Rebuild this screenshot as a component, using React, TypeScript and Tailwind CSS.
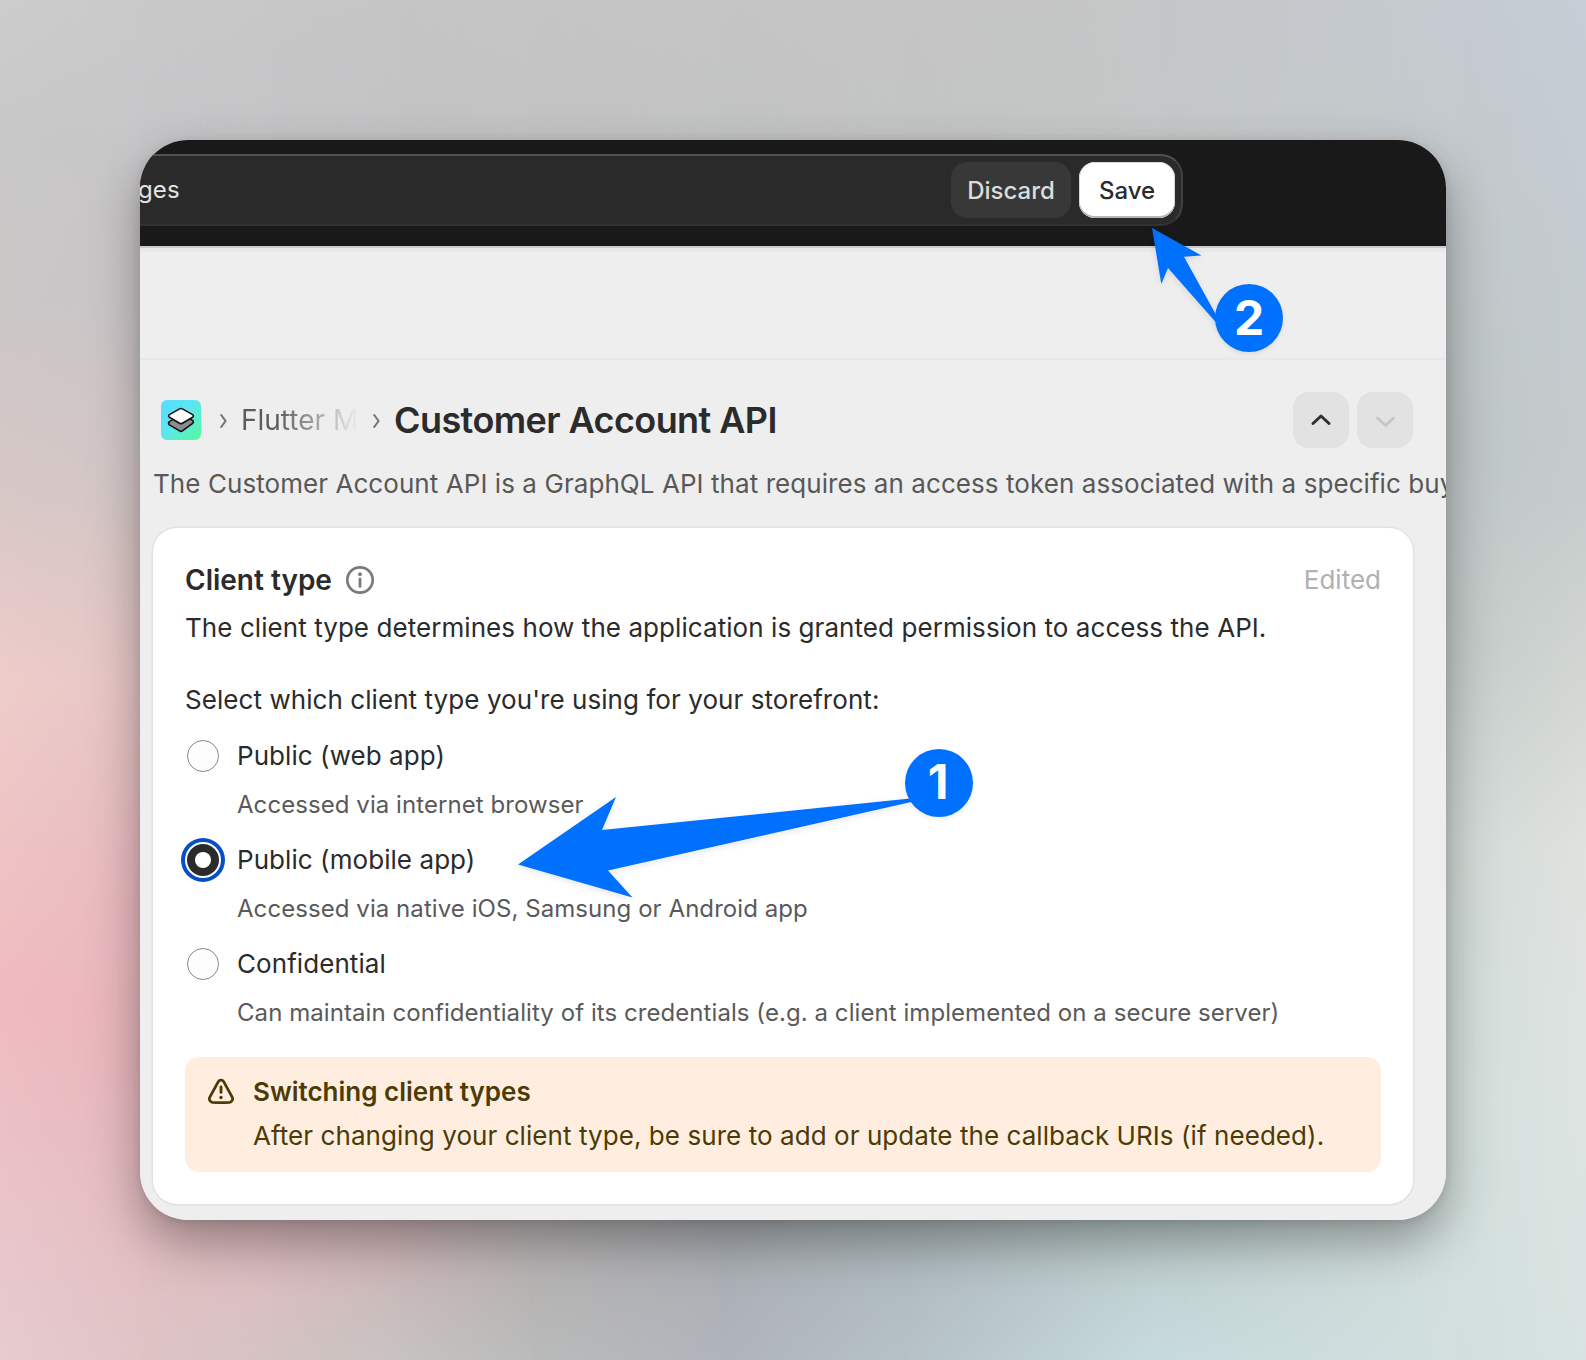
import React from "react";

const columns = [
  "bg-[linear-gradient(180deg,#cccdcc_0px,#c9c8c8_140px,#cbc7c7_300px,#d8c8c6_500px,#eecdca_680px,#efc3c5_850px,#f0bbc0_1000px,#ebc2c7_1150px,#e6ccd0_1360px)]",
  "bg-[linear-gradient(180deg,#cac9ca_0px,#c7c6c8_140px,#c9c5c7_300px,#d4c6c6_500px,#e6c6c5_680px,#e8b9be_900px,#e7b6bb_1050px,#e4bdc1_1200px,#dfc4c6_1360px)] [mask-image:linear-gradient(90deg,transparent_0px,black_140px)]",
  "bg-[linear-gradient(180deg,#c8c7c8_0px,#c5c4c6_140px,#dab5b9_1200px,#d9c0c2_1300px,#d4c3c3_1360px)] [mask-image:linear-gradient(90deg,transparent_140px,black_270px)]",
  "bg-[linear-gradient(180deg,#c5c5c6_0px,#c3c3c4_140px,#d0b1b5_1200px,#c9bbbb_1300px,#c6c3c1_1360px)] [mask-image:linear-gradient(90deg,transparent_270px,black_400px)]",
  "bg-[linear-gradient(180deg,#c5c5c5_0px,#c3c3c4_140px,#bab4b4_1200px,#b7b5b4_1300px,#babbbb_1360px)] [mask-image:linear-gradient(90deg,transparent_400px,black_530px)]",
  "bg-[linear-gradient(180deg,#c5c5c5_0px,#c2c3c3_140px,#a9adb1_1200px,#b0b4bb_1360px)] [mask-image:linear-gradient(90deg,transparent_530px,black_720px)]",
  "bg-[linear-gradient(180deg,#c5c5c5_0px,#c3c4c4_140px,#acb6b9_1200px,#b5c1c7_1360px)] [mask-image:linear-gradient(90deg,transparent_720px,black_900px)]",
  "bg-[linear-gradient(180deg,#c5c6c7_0px,#c4c8c7_140px,#bccac9_1200px,#c7dbdd_1360px)] [mask-image:linear-gradient(90deg,transparent_900px,black_1160px)]",
  "bg-[linear-gradient(180deg,#c5cbd1_0px,#c3c9cb_200px,#bfc6c6_450px,#c5ccca_650px,#d3dbd7_850px,#d4dfdc_1100px,#d2dfde_1360px)] [mask-image:linear-gradient(90deg,transparent_1160px,black_1460px)]",
  "bg-[linear-gradient(180deg,#c5cdd6_0px,#c4cbd0_250px,#c6cccc_500px,#d4d8d4_700px,#dfe2df_850px,#dde4e2_1100px,#d8e3e1_1360px)] [mask-image:linear-gradient(90deg,transparent_1460px,black_1586px)]",
];

function Crumb() {
  return (
    <svg width="12" height="18" viewBox="0 0 12 18" fill="none" stroke="#747474" strokeWidth="2.1" strokeLinecap="round" strokeLinejoin="round">
      <path d="M3.2 4 7.6 10 3.2 16" />
    </svg>
  );
}

function AppIcon() {
  return (
    <div className="h-10 w-10 rounded-[6px] bg-[linear-gradient(135deg,#56dcff_0%,#5ce6ee_45%,#55fa9c_100%)]">
      <svg width="40" height="40" viewBox="0 0 40 40" stroke="#111" strokeWidth="1.6" strokeLinejoin="round">
        <path d="M20 14.5 31.6 20.4Q33.2 22 31.6 23.4L21.4 30.9Q20 31.9 18.6 30.9L8.4 24.9Q6.8 23.2 8.4 21.6Z" fill="#8c8c8c" />
        <path d="M18.6 8.9Q20 8 21.4 8.9L31.6 14.6Q33.2 15.9 31.6 17.2L21.4 23.2Q20 24 18.6 23.2L8.4 17.2Q6.8 15.9 8.4 14.6Z" fill="#fff" />
      </svg>
    </div>
  );
}

function Radio({ checked }: { checked?: boolean }) {
  return checked ? (
    <span className="flex h-8 w-8 items-center justify-center rounded-full bg-[#2b2b2b] shadow-[0_0_0_2px_#fff,0_0_0_6px_#0550c8]">
      <span className="h-4 w-4 rounded-full bg-white" />
    </span>
  ) : (
    <span className="h-8 w-8 rounded-full border border-[#8a8a8a] bg-[#fdfdfd]" />
  );
}

function Option({ label, help, checked }: { label: React.ReactNode; help: React.ReactNode; checked?: boolean }) {
  return (
    <div className="mb-[15px]">
      <div className="flex h-10 items-center gap-[18px] pl-[2px]">
        <Radio checked={checked} />
        <span className="text-[26px] leading-10 tracking-[0.065px] text-[#2b2b2b]">{label}</span>
      </div>
      <p className="mt-[9px] pl-[52px] text-[24px] leading-10 tracking-[0.065px] text-[#5a5a5a]">{help}</p>
    </div>
  );
}

function Badge({ n, className }: { n: string; className: string }) {
  return (
    <div className={"absolute flex h-[68px] w-[68px] items-center justify-center rounded-full bg-[#0070ff] text-[48px] font-bold leading-none text-white shadow-[0_2px_5px_rgba(0,0,0,0.08)] " + className}>
      {n}
    </div>
  );
}

export default function App() {
  return (
    <div className="relative h-[1360px] w-[1586px] overflow-hidden pl-[140px] pt-[140px] font-['Inter',sans-serif] font-normal">
      {columns.map((c, i) => (
        <div key={i} className={"absolute inset-0 " + c} />
      ))}

      <div className="relative h-[1080px] w-[1306px] rounded-[48px] shadow-[0_22px_50px_rgba(0,0,0,0.34),0_2px_10px_rgba(0,0,0,0.1)]">
        <div className="h-full w-full overflow-hidden whitespace-nowrap rounded-[48px] bg-[#eeeeee]">
          <header className="h-[106px] bg-[#191919] pr-[263px] pt-[14px]">
            <div className="-ml-[2px] flex h-[72px] items-center justify-between rounded-r-[22px] border-2 border-b-[#333] border-l-0 border-r-[#404040] border-t-[#515151] bg-[#2a2a2a] pr-[6px]">
              <span className="text-[24px] leading-none tracking-[0.1px] text-[#e3e3e3]">ges</span>
              <div className="flex gap-2">
                <button className="h-14 w-[120px] rounded-[16px] bg-[#383838] pt-px text-[24px] font-[550] text-[#dcdcdc]">Discard</button>
                <button className="h-14 w-[96px] rounded-[16px] bg-white pt-px text-[24px] font-[550] text-[#2b2b2b] shadow-[inset_0_-2px_0_#b5b5b5,inset_0_0_0_1px_#d8d8d8]">Save</button>
              </div>
            </div>
          </header>

          <div className="h-[114px] border-b-2 border-[#e8e8e8] shadow-[inset_0_2px_0_#cbcbcb,inset_0_6px_0_#e9e9e9]" />

          <div className="mt-[32px] flex h-14 items-center pl-[21px] pr-[33px]">
            <AppIcon />
            <div className="ml-[17px] flex items-center">
              <Crumb />
              <span className="ml-[11px] w-[120px] bg-[linear-gradient(90deg,#5c5c5c_30%,rgba(97,97,97,0)_98%)] bg-clip-text text-[28px] leading-10 text-transparent">Flutter M</span>
              <span className="ml-[10px] flex"><Crumb /></span>
              <h1 className="ml-[11px] text-[36px] font-semibold leading-10 tracking-[-0.58px] text-[#2b2b2b]">Customer Account API</h1>
            </div>
            <div className="ml-auto flex gap-2">
              <button className="flex h-14 w-14 items-center justify-center rounded-[16px] bg-[#e2e2e2]">
                <svg width="24" height="24" viewBox="0 0 24 24" fill="none" stroke="#303030" strokeWidth="3" strokeLinecap="round" strokeLinejoin="round"><path d="M4 15.5 12 8 20 15.5" /></svg>
              </button>
              <button className="flex h-14 w-14 items-center justify-center rounded-[16px] bg-[#e2e2e2]">
                <svg width="24" height="24" viewBox="0 0 24 24" fill="none" stroke="#c6c6c6" strokeWidth="2.8" strokeLinecap="round" strokeLinejoin="round"><path d="M4.5 10 12.5 17.5 20.5 10" /></svg>
              </button>
            </div>
          </div>

          <p className="mt-[16px] pl-[13px] text-[26px] leading-10 tracking-[0.065px] text-[#585858]">
            The Customer Account API is a GraphQL API that requires an access token associated with a specific buy
          </p>

          <section className="ml-[13px] mt-[24px] h-[676px] w-[1260px] rounded-[24px] bg-white p-8 text-[#2b2b2b] shadow-[0_0_0_1.5px_#e2e2e2,0_1px_1px_#b0b0b0]">
            <div className="flex h-10 items-center">
              <h2 className="text-[28px] font-semibold leading-10">Client type</h2>
              <svg className="ml-[13px]" width="30" height="30" viewBox="0 0 30 30" fill="none">
                <circle cx="15" cy="15" r="12.7" stroke="#7b7b7b" strokeWidth="2.7" />
                <path d="M15 14v7.4" stroke="#7b7b7b" strokeWidth="2.8" strokeLinecap="round" />
                <circle cx="15" cy="9.2" r="1.9" fill="#7b7b7b" />
              </svg>
              <span className="-mt-px ml-auto text-[26px] text-[#b1b1b1]">Edited</span>
            </div>
            <p className="mt-[8px] text-[26px] leading-10 tracking-[0.065px]">The client type determines how the application is granted permission to access the API.</p>
            <p className="mb-4 mt-[32px] text-[26px] leading-10 tracking-[0.065px]">Select which client type you're using for your storefront:</p>
            <Option label="Public (web app)" help="Accessed via internet browser" />
            <Option checked label="Public (mobile app)" help="Accessed via native iOS, Samsung or Android app" />
            <Option label="Confidential" help="Can maintain confidentiality of its credentials (e.g. a client implemented on a secure server)" />
            <div className="mt-[24px] flex h-[115px] rounded-[14px] bg-[#ffeedf] pl-[21px] pt-[15px] text-[26px] leading-10 text-[#4c3b05]">
              <svg className="mt-[5px]" width="30" height="30" viewBox="0 0 30 30" fill="none" stroke="#4c3b05" strokeWidth="2.8" strokeLinecap="round" strokeLinejoin="round">
                <path d="M12.3 4.6c1.2-2 4.2-2 5.4 0l8.6 15.8c1.1 2-.3 4.5-2.6 4.9-5.8.4-11.6.4-17.4 0-2.3-.4-3.7-2.9-2.6-4.9Z" />
                <path d="M15 9.8v5.6" />
                <path d="M15 20.4v.2" strokeWidth="3.4" />
              </svg>
              <div className="ml-[17px]">
                <p className="font-semibold">Switching client types</p>
                <p className="mt-1 tracking-[0.065px]">After changing your client type, be sure to add or update the callback URIs (if needed).</p>
              </div>
            </div>
          </section>
        </div>
      </div>

      <svg className="absolute inset-0 drop-shadow-[0_2px_3px_rgba(0,0,0,0.1)]" width="1586" height="1360" fill="#0070ff">
        <path d="M518 864.5 616 797 602 830 920 797.5 920 800 608 870.5 632.5 897.5Z" />
        <path d="M1152 228 1201.5 255.5 1184 256.7 1220 322 1220 327 1168 268 1161.3 284Z" />
      </svg>
      <Badge n="1" className="left-[905px] top-[749px] pb-[3px] pr-[2px]" />
      <Badge n="2" className="left-[1215px] top-[284px]" />
    </div>
  );
}
